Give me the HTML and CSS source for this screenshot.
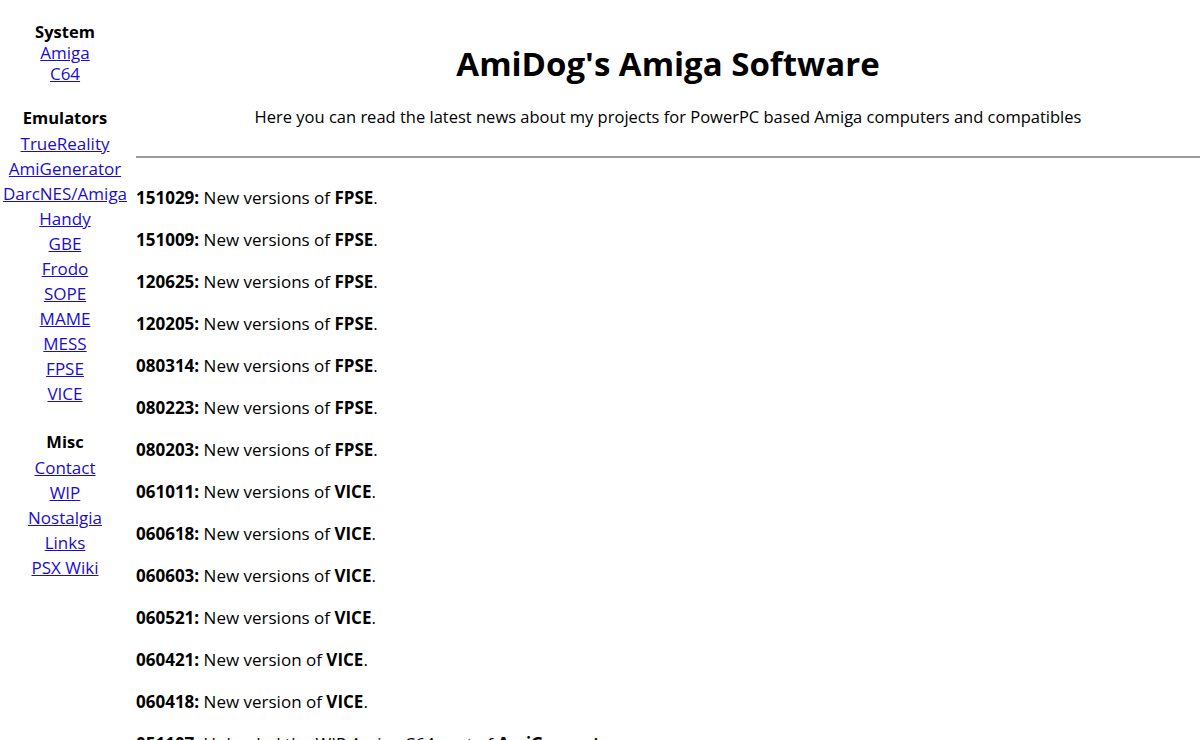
FILE: index.html
```html
<!DOCTYPE html>
<html lang="en">
<head>
  <meta charset="UTF-8">
  <title>AmiDog's Amiga Software</title>
  <link rel="stylesheet" href="styles.css">
</head>
<body>
  <div class="page">
    <nav class="menu">
      <div class="group first">
        <b>System</b>
        <a href="#">Amiga</a>
        <a href="#">C64</a>
      </div>
      <div class="group">
        <b>Emulators</b>
        <a href="#">TrueReality</a>
        <a href="#">AmiGenerator</a>
        <a href="#">DarcNES/Amiga</a>
        <a href="#">Handy</a>
        <a href="#">GBE</a>
        <a href="#">Frodo</a>
        <a href="#">SOPE</a>
        <a href="#">MAME</a>
        <a href="#">MESS</a>
        <a href="#">FPSE</a>
        <a href="#">VICE</a>
      </div>
      <div class="group">
        <b>Misc</b>
        <a href="#">Contact</a>
        <a href="#">WIP</a>
        <a href="#">Nostalgia</a>
        <a href="#">Links</a>
        <a href="#">PSX Wiki</a>
      </div>
    </nav>
    <main class="content">
      <h1>AmiDog's Amiga Software</h1>
      <p class="intro">Here you can read the latest news about my projects for PowerPC based Amiga computers and compatibles</p>
      <hr>
      <div class="news">
        <p><b>151029:</b> New versions of <b>FPSE</b>.</p>
        <p><b>151009:</b> New versions of <b>FPSE</b>.</p>
        <p><b>120625:</b> New versions of <b>FPSE</b>.</p>
        <p><b>120205:</b> New versions of <b>FPSE</b>.</p>
        <p><b>080314:</b> New versions of <b>FPSE</b>.</p>
        <p><b>080223:</b> New versions of <b>FPSE</b>.</p>
        <p><b>080203:</b> New versions of <b>FPSE</b>.</p>
        <p><b>061011:</b> New versions of <b>VICE</b>.</p>
        <p><b>060618:</b> New versions of <b>VICE</b>.</p>
        <p><b>060603:</b> New versions of <b>VICE</b>.</p>
        <p><b>060521:</b> New versions of <b>VICE</b>.</p>
        <p><b>060421:</b> New version of <b>VICE</b>.</p>
        <p><b>060418:</b> New version of <b>VICE</b>.</p>
        <p><b>051107:</b> Uploaded the WIP Amiga C64 port of <b>AmiGenerator</b>.</p>
      </div>
    </main>
  </div>
</body>
</html>
```

FILE: styles.css
```css
html, body {
  margin: 0;
  padding: 0;
  background: #fff;
  color: #000;
  font-family: "Open Sans", "Noto Sans", sans-serif;
  font-size: 17px;
}

.page {
  display: flex;
  align-items: flex-start;
}

/* left menu */
.menu {
  width: 130px;
  flex-shrink: 0;
  padding-top: 21px;
  text-align: center;
}
.group {
  display: flex;
  flex-direction: column;
  align-items: center;
  margin-bottom: 23px;
}
.group b {
  font-size: 16.5px;
  line-height: 26px;
}
.group a {
  line-height: 25px;
  color: #1a0dcc;
}
.group.first {
  margin-bottom: 21px;
}
.group.first b,
.group.first a {
  line-height: 21px;
}

/* right side */
.content {
  flex: 1;
  margin-left: 6px;
}
h1 {
  margin: 42px 0 0;
  font-size: 33px;
  line-height: 44px;
  text-align: center;
}
.intro {
  margin: 19px 0 0;
  font-size: 16.5px;
  line-height: 24px;
  text-align: center;
}
hr {
  margin: 27px 0 0;
  border: 0;
  border-top: 2px solid #9a9a9a;
}
.news {
  padding-top: 10px;
}
.news p {
  margin: 18px 0;
  line-height: 24px;
}
```
